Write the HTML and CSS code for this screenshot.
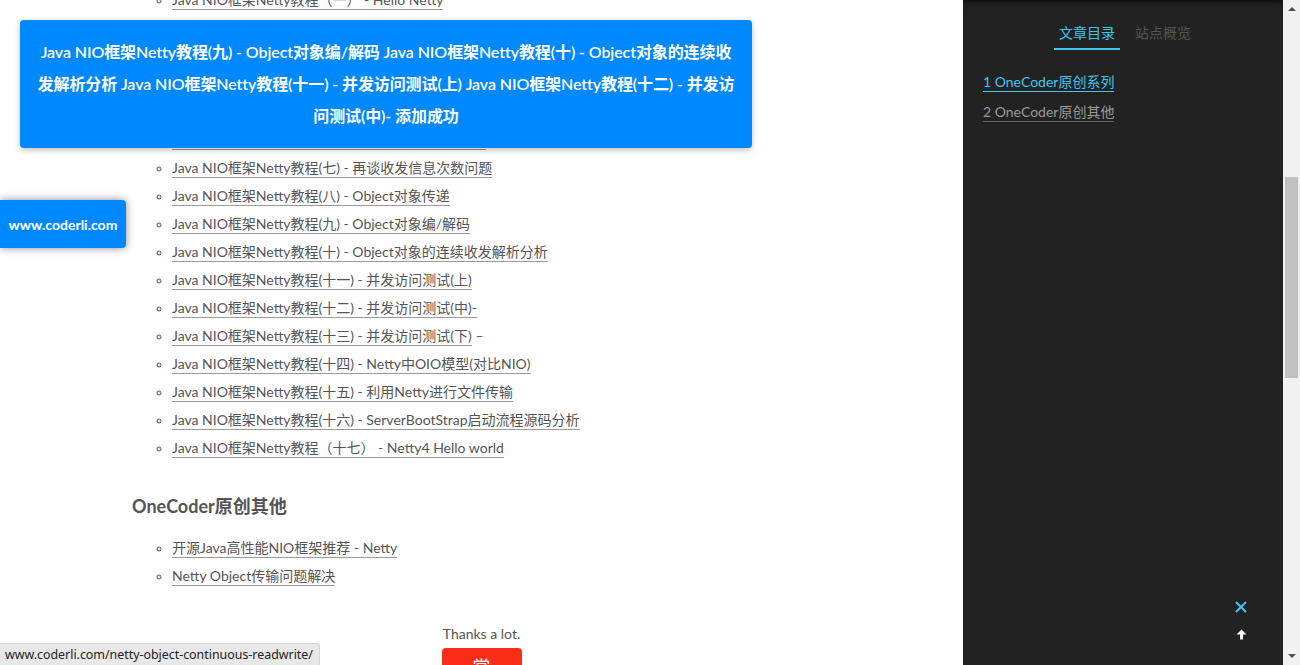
FILE: index.html
```html
<!DOCTYPE html>
<html lang="zh-CN">
<head>
<meta charset="utf-8">
<title>Netty Object 连续收发</title>
<link rel="stylesheet" href="styles.css">
</head>
<body>
<div class="page">
  <main class="main">
    <div class="post">
      <ul class="series">
        <li><a href="#">Java NIO框架Netty教程（一） - Hello Netty</a></li>
        <li><a href="#">Java NIO框架Netty教程（二）- 白话概念</a></li>
        <li><a href="#">Java NIO框架Netty教程(三) - 字符串消息收发</a></li>
        <li><a href="#">Java NIO框架Netty教程(四) - ChannelBuffer</a></li>
        <li><a href="#">Java NIO框架Netty教程(五) - 消息收发次数不匹配的问题</a></li>
        <li><a href="#">Java NIO框架Netty教程(六) - 收发信息次数问题(续)</a></li>
        <li><a href="#">Java NIO框架Netty教程(七) - 再谈收发信息次数问题</a></li>
        <li><a href="#">Java NIO框架Netty教程(八) - Object对象传递</a></li>
        <li><a href="#">Java NIO框架Netty教程(九) - Object对象编/解码</a></li>
        <li><a href="#">Java NIO框架Netty教程(十) - Object对象的连续收发解析分析</a></li>
        <li><a href="#">Java NIO框架Netty教程(十一) - 并发访问测试(上)</a></li>
        <li><a href="#">Java NIO框架Netty教程(十二) - 并发访问测试(中)-</a></li>
        <li><a href="#">Java NIO框架Netty教程(十三) - 并发访问测试(下)</a> –</li>
        <li><a href="#">Java NIO框架Netty教程(十四) - Netty中OIO模型(对比NIO)</a></li>
        <li><a href="#">Java NIO框架Netty教程(十五) - 利用Netty进行文件传输</a></li>
        <li><a href="#">Java NIO框架Netty教程(十六) - ServerBootStrap启动流程源码分析</a></li>
        <li><a href="#">Java NIO框架Netty教程（十七） - Netty4 Hello world</a></li>
      </ul>
      <h2 class="section-title">OneCoder原创其他</h2>
      <ul class="series">
        <li><a href="#">开源Java高性能NIO框架推荐 - Netty</a></li>
        <li><a href="#">Netty Object传输问题解决</a></li>
      </ul>
    </div>
    <div class="reward">
      <div class="thanks">Thanks a lot.</div>
      <button class="reward-btn">赏</button>
    </div>
    <div class="toast">
      <span class="toast-line">Java NIO框架Netty教程(九) - Object对象编/解码 Java NIO框架Netty教程(十) - Object对象的连续收</span>
      <span class="toast-line">发解析分析 Java NIO框架Netty教程(十一) - 并发访问测试(上) Java NIO框架Netty教程(十二) - 并发访</span>
      <span class="toast-line">问测试(中)- 添加成功</span>
    </div>
    <a class="site-badge" href="#">www.coderli.com</a>
    <div class="status-bar">www.coderli.com/netty-object-continuous-readwrite/</div>
  </main>
  <aside class="sidebar">
    <nav class="tabs">
      <span class="tab active">文章目录</span>
      <span class="tab">站点概览</span>
    </nav>
    <ol class="toc">
      <li><a class="toc-link active" href="#">1 OneCoder原创系列</a></li>
      <li><a class="toc-link" href="#">2 OneCoder原创其他</a></li>
    </ol>
    <div class="side-tools">
      <svg class="tool-close" width="12" height="12" viewBox="0 0 12 12"><path d="M1 1L11 11M11 1L1 11" stroke="#3ec6f2" stroke-width="2"/></svg>
      <svg class="tool-up" width="11" height="11" viewBox="0 0 11 11"><path d="M5.5 0.5L10.5 5.5H7V10.5H4V5.5H0.5Z" fill="#fff"/></svg>
    </div>
  </aside>
  <div class="scrollbar">
    <span class="arrow-up"></span>
    <div class="track"><div class="thumb"></div></div>
    <span class="arrow-down"></span>
  </div>
</div>
</body>
</html>
```

FILE: styles.css
```css
* { box-sizing: border-box; }
html, body { margin: 0; padding: 0; }
body {
  width: 1300px;
  height: 665px;
  overflow: hidden;
  background: #fff;
  font-family: "Lato", "Noto Sans CJK SC", sans-serif;
  color: #555;
}
.page {
  display: flex;
  height: 665px;
}
.main {
  width: 963px;
  flex: none;
  position: relative;
  overflow: hidden;
}
.post {
  padding-left: 132px;
  margin-top: -14px;
}
.series {
  margin: 0;
  padding-left: 40px;
  list-style: circle;
  font-size: 14px;
  line-height: 28px;
}
.series li { color: #555; }
.series li::marker { color: #555; font-size: 12px; }
.series a {
  color: #555;
  text-decoration: none;
  border-bottom: 1px solid #999;
  padding-bottom: 1px;
}
.section-title {
  margin: 30px 0 14px;
  font-size: 18px;
  line-height: 28px;
  font-weight: bold;
  color: #555;
}
.reward {
  margin-top: 34px;
  display: flex;
  flex-direction: column;
  align-items: center;
}
.thanks {
  font-size: 14px;
  line-height: 20px;
  color: #555;
}
.reward-btn {
  margin-top: 4px;
  width: 80px;
  height: 36px;
  border: 0;
  border-radius: 4px;
  background: #fc2d16;
  color: #fff;
  font-family: "Noto Sans CJK SC", sans-serif;
  font-size: 18px;
  padding: 0;
}
.toast {
  position: absolute;
  left: 20px;
  top: 20px;
  width: 732px;
  height: 128px;
  padding: 16px 10px;
  background: #0088ff;
  border-radius: 4px;
  box-shadow: 0 2px 6px rgba(0,0,0,0.25);
  color: #fff;
  font-size: 16px;
  font-weight: 600;
  line-height: 32px;
  text-align: center;
  letter-spacing: -0.1px;
}
.toast-line { display: block; white-space: nowrap; }
.site-badge {
  position: absolute;
  left: 0;
  top: 200px;
  width: 126px;
  height: 48px;
  display: flex;
  align-items: center;
  justify-content: center;
  background: #0088ff;
  border-radius: 0 4px 4px 0;
  box-shadow: 0 0 8px rgba(0,0,0,0.45);
  color: #fff;
  font-size: 14px;
  font-weight: bold;
  text-decoration: none;
}
.status-bar {
  position: absolute;
  left: 0;
  bottom: 0;
  height: 22px;
  padding: 0 6px 0 5px;
  background: #e8e8e8;
  border-top: 1px solid #d6d6d6;
  border-right: 1px solid #d6d6d6;
  border-top-right-radius: 3px;
  font-family: "Noto Sans", sans-serif;
  font-size: 12.4px;
  line-height: 21px;
  color: #222;
}
.sidebar {
  width: 320px;
  flex: none;
  background: #222;
  box-shadow: inset 0 6px 6px -4px rgba(0,0,0,0.7);
  position: relative;
  padding-top: 23px;
}
.tabs {
  display: flex;
  justify-content: center;
  gap: 10px;
  font-size: 14px;
  line-height: 20px;
  padding-left: 4px;
}
.tab {
  color: #555;
  padding: 0 5px 5px;
  border-bottom: 2px solid transparent;
}
.tab.active {
  color: #3ec6f2;
  border-bottom-color: #3ec6f2;
}
.toc {
  list-style: none;
  margin: 0;
  padding: 17px 20px 0;
  font-size: 14px;
  line-height: 30px;
}
.toc-link {
  color: #999;
  text-decoration: none;
  border-bottom: 1px solid #666;
  padding-bottom: 1px;
}
.toc-link.active {
  color: #3ec6f2;
  border-bottom-color: #3ec6f2;
}
.side-tools {
  position: absolute;
  left: 272px;
  top: 601px;
  width: 12px;
  display: flex;
  flex-direction: column;
  align-items: center;
  gap: 16px;
}
.tool-up { display: block; }
.tool-close { display: block; }
.scrollbar {
  width: 17px;
  flex: none;
  background: #f1f1f1;
  display: flex;
  flex-direction: column;
  align-items: center;
}
.arrow-up, .arrow-down {
  width: 0;
  height: 0;
  border-left: 4px solid transparent;
  border-right: 4px solid transparent;
  flex: none;
}
.arrow-up {
  margin-top: 7px;
  border-bottom: 4px solid #505050;
}
.arrow-down {
  margin-bottom: 7px;
  border-top: 4px solid #505050;
}
.track {
  flex: 1;
  width: 100%;
  padding: 166px 2px 0;
}
.thumb {
  height: 201px;
  background: #c1c1c1;
}
```
